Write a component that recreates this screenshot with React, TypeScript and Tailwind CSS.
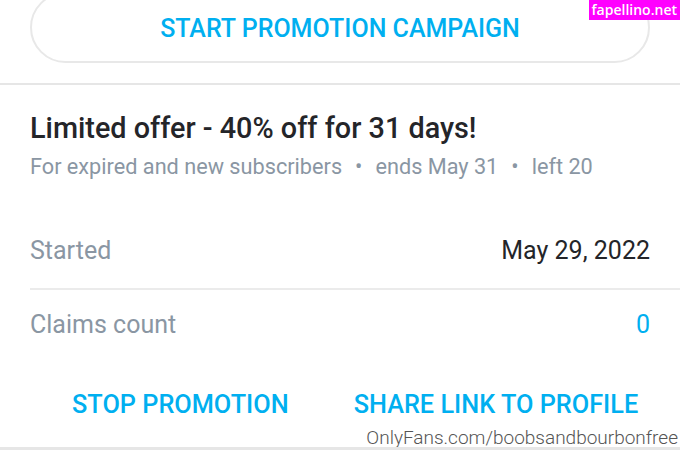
export default function App() {
  return (
    <div
      className="relative w-[680px] h-[450px] overflow-hidden bg-white"
      style={{ fontFamily: "Roboto, 'Noto Sans', sans-serif" }}
    >
      {/* campaign button */}
      <div className="flex flex-col h-[85px] px-[30px] border-b-2 border-[#e6e6e6]">
        <button className="-mt-[8px] w-full h-[71px] rounded-full border-2 border-[#e8e8e8] flex items-center justify-center pt-[3px] text-[25px] font-medium text-[#00aff0]">
          START PROMOTION CAMPAIGN
        </button>
      </div>

      <div className="pl-[30px]">
        <div className="pr-[30px] pt-[26px]">
          <h2 className="text-[28.8px] leading-[34px] font-medium text-[#242529]">
            Limited offer - 40% off for 31 days!
          </h2>
          <div className="mt-[9px] flex items-center text-[21.7px] leading-[26px] text-[#8a96a3]">
            <span>For expired and new subscribers</span>
            <span className="px-[13px]">•</span>
            <span>ends May 31</span>
            <span className="px-[13px]">•</span>
            <span>left 20</span>
          </div>
        </div>

        <div className="mt-[56px] flex items-center justify-between pr-[30px] pb-[22px] border-b-2 border-[#ebebeb] text-[25px] leading-[30px]">
          <span className="text-[#8a96a3]">Started</span>
          <span className="text-[#242529]">May 29, 2022</span>
        </div>

        <div className="pt-[20px] flex items-center justify-between pr-[30px] text-[25px] leading-[30px]">
          <span className="text-[#8a96a3]">Claims count</span>
          <span className="text-[#00aff0]">0</span>
        </div>
      </div>

      <div className="mt-[50px] flex items-center text-[25.3px] leading-[30px] font-medium text-[#00aff0]">
        <span className="ml-[72px]">STOP PROMOTION</span>
        <span className="ml-[65px]">SHARE LINK TO PROFILE</span>
      </div>

      {/* watermarks */}
      <div
        className="absolute right-0 top-0 h-[20px] px-[3px] bg-[#ff00ff] text-white text-[14px] leading-[19px] font-semibold"
        style={{ fontFamily: "'Open Sans', sans-serif" }}
      >
        fapellino.net
      </div>
      <div className="absolute right-[2px] bottom-[-1px] text-[19px] leading-[26px] font-light text-[#555]">
        OnlyFans.com/boobsandbourbonfree
      </div>
      <div className="absolute left-0 right-0 bottom-0 h-[3px] bg-[#e6e6e6]" />
    </div>
  );
}
